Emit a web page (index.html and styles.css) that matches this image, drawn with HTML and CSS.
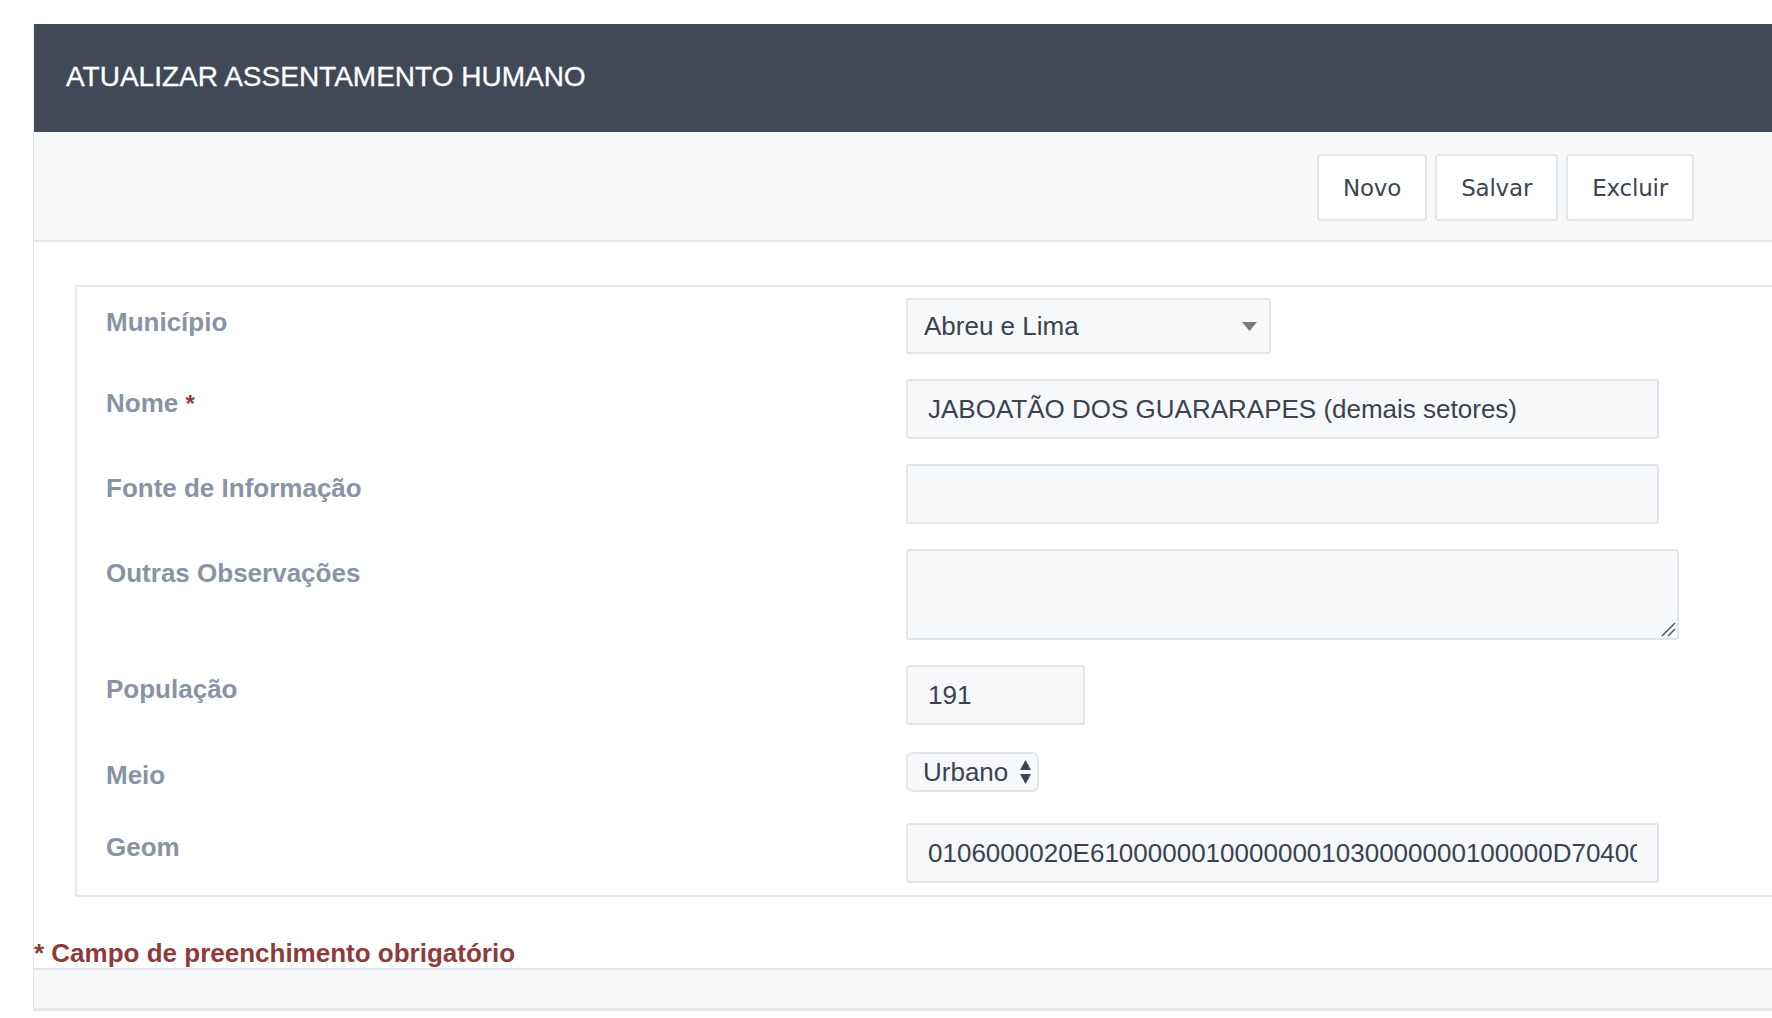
FILE: index.html
```html
<!DOCTYPE html>
<html lang="pt-BR">
<head>
<meta charset="utf-8">
<title>Atualizar Assentamento Humano</title>
<link rel="stylesheet" href="styles.css">
</head>
<body>
<div class="container">
  <div class="page-header">
    <h1 class="page-title">ATUALIZAR ASSENTAMENTO HUMANO</h1>
  </div>
  <div class="toolbar">
    <button class="btn" type="button">Novo</button>
    <button class="btn" type="button">Salvar</button>
    <button class="btn" type="button">Excluir</button>
  </div>
  <div class="content">
    <form class="panel">
      <div class="row">
        <label class="label">Município</label>
        <div class="control">
          <div class="select-wrap select-municipio">
            <select class="select">
              <option>Abreu e Lima</option>
            </select>
            <svg class="select-arrow" width="15" height="9" viewBox="0 0 15 9"><path d="M0 0H15L7.5 9Z" fill="#7a7a7a"/></svg>
          </div>
        </div>
      </div>
      <div class="row">
        <label class="label">Nome <span class="req">*</span></label>
        <div class="control">
          <input class="input input-wide" type="text" value="JABOATÃO DOS GUARARAPES (demais setores)">
        </div>
      </div>
      <div class="row">
        <label class="label">Fonte de Informação</label>
        <div class="control">
          <input class="input input-wide" type="text" value="">
        </div>
      </div>
      <div class="row">
        <label class="label">Outras Observações</label>
        <div class="control">
          <div class="textarea-wrap">
            <textarea class="textarea"></textarea>
            <svg class="grip" width="15" height="15" viewBox="0 0 15 15"><path d="M1 14L14 1M7 14L14 7" stroke="#555b66" stroke-width="1.5" fill="none"/></svg>
          </div>
        </div>
      </div>
      <div class="row">
        <label class="label">População</label>
        <div class="control">
          <input class="input input-small" type="text" value="191">
        </div>
      </div>
      <div class="row row-meio">
        <label class="label label-meio">Meio</label>
        <div class="control">
          <div class="select-wrap select-meio">
            <select class="select select-small">
              <option>Urbano</option>
            </select>
            <svg class="updown" width="13" height="26" viewBox="0 0 13 26"><path d="M6.5 1L12 11H1Z" fill="#3f4553"/><path d="M6.5 25L12 15H1Z" fill="#3f4553"/></svg>
          </div>
        </div>
      </div>
      <div class="row">
        <label class="label">Geom</label>
        <div class="control">
          <input class="input input-wide" type="text" value="0106000020E61000000100000001030000000100000D70400000A4D4E1D5C8AA41C0E3A8E4D45C9F1FC0">
        </div>
      </div>
    </form>
    <p class="required-note">* Campo de preenchimento obrigatório</p>
  </div>
  <div class="footer-bar"></div>
</div>
</body>
</html>
```

FILE: styles.css
```css
html, body {
  margin: 0;
  padding: 0;
  background: #ffffff;
  overflow: hidden;
}

body {
  font-family: "Liberation Sans", Arial, Helvetica, sans-serif;
  color: #3c4250;
  width: 1772px;
  height: 1018px;
}

.container {
  margin: 24px 0 0 33px;
  border-left: 1px solid #e1e5ea;
  height: 987px;
}

.page-header {
  height: 108px;
  background: #414958;
  display: flex;
  align-items: center;
  padding-left: 32px;
}

.page-title {
  margin: 0;
  font-size: 28px;
  font-weight: normal;
  color: #ffffff;
  line-height: 30px;
  padding-bottom: 2px;
  -webkit-text-stroke: 0.3px #ffffff;
}

.toolbar {
  height: 108px;
  box-sizing: content-box;
  background: #f7f8fa;
  border-bottom: 2px solid #e4e7eb;
  display: flex;
  justify-content: flex-end;
  align-items: flex-start;
  padding-right: 78px;
  gap: 8px;
}

.btn {
  margin-top: 22px;
  height: 67px;
  padding: 0 24px;
  background: #ffffff;
  border: 2px solid #e3e6ea;
  border-radius: 4px;
  font-family: "DejaVu Sans", Verdana, sans-serif;
  font-size: 23px;
  color: #3d4452;
  letter-spacing: -0.2px;
}

.content {
  padding-top: 43px;
}

.panel {
  margin: 0 -20px 0 41px;
  border: 2px solid #e6e9ed;
  padding: 11px 0 12px 29px;
  display: flex;
  flex-direction: column;
  gap: 25px;
}

.row {
  display: grid;
  grid-template-columns: 800px 1fr;
  align-items: start;
}

.label {
  font-size: 26px;
  font-weight: bold;
  color: #8a93a5;
  line-height: 30px;
  padding-top: 9px;
}

.label-meio {
  padding-top: 10px;
}

.req {
  color: #8e3b3b;
  font-size: 24px;
}

.control {
  display: flex;
}

.select-wrap {
  position: relative;
  display: inline-block;
}

.select {
  appearance: none;
  -webkit-appearance: none;
  width: 365px;
  height: 56px;
  box-sizing: border-box;
  background: #f7f8fa;
  border: 2px solid #e2e5e9;
  border-radius: 3px;
  padding: 0 40px 0 16px;
  font-family: "Liberation Sans", Arial, sans-serif;
  font-size: 26px;
  color: #3c4250;
}

.select-arrow {
  position: absolute;
  right: 14px;
  top: 24px;
}

.select-meio {
  margin-top: 2px;
  margin-bottom: 6px;
}

.select-small {
  width: 133px;
  height: 40px;
  border-radius: 7px;
  padding: 0 26px 0 15px;
  font-size: 26px;
}

.updown {
  position: absolute;
  right: 7px;
  top: 7px;
}

.input {
  height: 60px;
  box-sizing: border-box;
  background: #f7f8fa;
  border: 2px solid #e2e5e9;
  border-radius: 3px;
  padding: 0 20px;
  font-family: "Liberation Sans", Arial, sans-serif;
  font-size: 26px;
  color: #3c4250;
}

.input-wide {
  width: 753px;
}

.input-small {
  width: 179px;
}

.textarea-wrap {
  position: relative;
}

.textarea {
  width: 773px;
  height: 91px;
  box-sizing: border-box;
  background: #f7f8fa;
  border: 2px solid #e2e5e9;
  border-radius: 3px;
  padding: 10px 20px;
  font-family: "Liberation Sans", Arial, sans-serif;
  font-size: 26px;
  resize: none;
  display: block;
}

.grip {
  position: absolute;
  right: 3px;
  bottom: 3px;
}

.required-note {
  margin: 41px 0 0 0;
  font-size: 26px;
  line-height: 30px;
  font-weight: bold;
  color: #8e3b3b;
}

.footer-bar {
  height: 38px;
  background: #f7f8fa;
  border-top: 2px solid #e4e7eb;
  border-bottom: 3px solid #e4e7eb;
}
```
